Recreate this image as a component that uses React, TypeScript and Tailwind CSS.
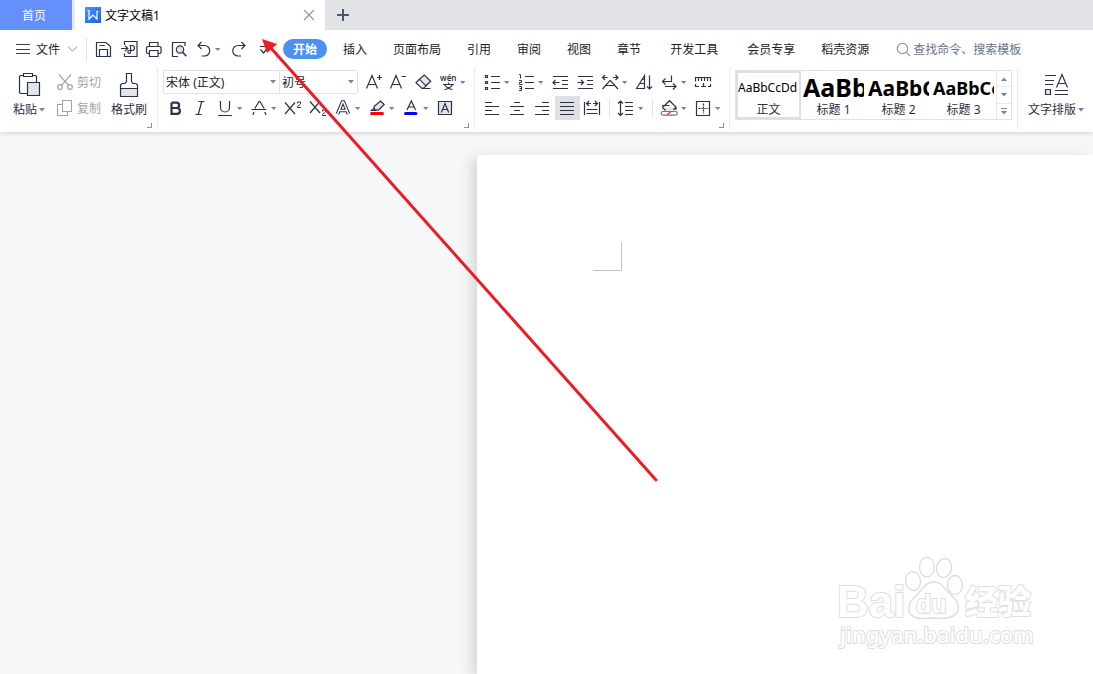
import React from "react";

const FONT = "font-['Noto_Sans','Noto_Sans_CJK_SC',sans-serif]";

type IconProps = { children: React.ReactNode; menu?: boolean };

function Glyph({ children, menu }: IconProps) {
  return (
    <svg
      width={menu ? 34 : 25}
      height={24}
      viewBox={menu ? "0 0 34 24" : "0 0 25 24"}
      fill="none"
      stroke="#2b3347"
      strokeWidth={1.2}
      aria-hidden="true"
      className="block shrink-0"
    >
      {children}
      {menu && <path d="M24 11h5.4l-2.7 3z" fill="#7382a0" stroke="none" />}
    </svg>
  );
}

function Tool({ label, menu, active, children }: IconProps & { label: string; active?: boolean }) {
  return (
    <button type="button" aria-label={label} title={label} className={active ? "shrink-0 bg-[#dde1e6]" : "shrink-0 hover:bg-gray-100"}>
      <Glyph menu={menu}>{children}</Glyph>
    </button>
  );
}

function Caret({ className = "" }: { className?: string }) {
  return (
    <svg width="6" height="4" viewBox="0 0 6 4" className={className} aria-hidden="true">
      <path d="M0 0h6l-3 3.5z" fill="#7382a0" />
    </svg>
  );
}

function Group({ children, className = "pl-[5px] pr-1", launcher }: { children: React.ReactNode; className?: string; launcher?: string }) {
  return (
    <section className={`relative flex h-[61px] shrink-0 border-r border-[#e9ebee] pt-[2px] ${className}`}>
      {children}
      {launcher && (
        <button type="button" aria-label={launcher} className="absolute right-[5px] bottom-px h-[5px] w-[5px] border-r border-b border-[#8791a8]" />
      )}
    </section>
  );
}

function RowDivider() {
  return (
    <span className="flex w-[9px] justify-center py-[3px]">
      <span className="w-px bg-[#dfe2e6]" />
    </span>
  );
}

function FontSelect({ label, value, className }: { label: string; value: string; className: string }) {
  return (
    <label className={`relative flex items-center ${className}`}>
      <select aria-label={label} className="h-full w-full appearance-none bg-transparent pt-[2px] pl-[2px] text-xs text-[#222] outline-none">
        <option>{value}</option>
      </select>
      <Caret className="pointer-events-none absolute right-[3px]" />
    </label>
  );
}

function TitleBar() {
  return (
    <header className="flex h-[30px] bg-[#e1e3e7] text-xs">
      <button type="button" className="w-[72px] bg-[#658ffb] pt-[2px] pr-1 text-white">首页</button>
      <div className="flex w-[253px] items-center border-l-[3px] border-[#e8eaed] bg-white pr-[10px] pl-[10px]">
        <svg width="16" height="16" viewBox="0 0 16 16" aria-hidden="true">
          <defs>
            <linearGradient id="brand" x1="0" y1="0" x2="1" y2="1">
              <stop offset="0" stopColor="#4b95f8" />
              <stop offset="1" stopColor="#1265ef" />
            </linearGradient>
          </defs>
          <rect width="16" height="16" fill="url(#brand)" />
          <path d="M2.500 3.500h1.500v8.500l4-4 4 4V4.500h1.500" fill="none" stroke="#fff" strokeWidth="1.200" />
        </svg>
        <span className="ml-1 flex-1 pt-[2px] text-black">文字文稿1</span>
        <button type="button" aria-label="关闭">
          <svg width="12" height="12" viewBox="0 0 12 12" stroke="#8b97ae" strokeWidth="1.2">
            <path d="M1 1l10 10M11 1L1 11" />
          </svg>
        </button>
      </div>
      <button type="button" aria-label="新建" className="ml-3 flex items-center">
        <svg width="12" height="12" viewBox="0 0 12 12" stroke="#4b5874" strokeWidth="2">
          <path d="M6 0v12M0 6h12" />
        </svg>
      </button>
    </header>
  );
}

const tabs = [
  { name: "插入" },
  { name: "页面布局" },
  { name: "引用" },
  { name: "审阅" },
  { name: "视图" },
  { name: "章节" },
  { name: "开发工具", wide: true },
  { name: "会员专享" },
  { name: "稻壳资源" },
];

function MenuBar() {
  return (
    <nav className="flex h-[38px] items-center bg-white text-xs text-[#222]">
      <button type="button" className="flex items-center pl-4">
        <svg width="14" height="12" viewBox="0 0 14 12" stroke="#3c4354" aria-hidden="true">
          <path d="M0 1.5h14M0 6.5h14M0 10.5h14" />
        </svg>
        <span className="ml-[6px] pt-[2px]">文件</span>
        <svg width="11" height="6" viewBox="0 0 11 6" fill="none" stroke="#8c939f" className="ml-[7px]" aria-hidden="true">
          <path d="M.8.5l4.7 4.5L10.2.5" />
        </svg>
      </button>
      <span className="mr-1 ml-2 h-[23px] w-px bg-[#dfe2e6]" />
      <Tool label="保存">
        <path d="M5.500 5.500h9.500l4.500 4v10h-14zM8.500 19.500v-7h8v7M8.500 8.500h5" />
      </Tool>
      <Tool label="输出为PDF">
        <path d="M8.500 8V4.500h12.500v15H8.500v-3M5 11.500h6.500M9 8.800l2.800 2.700L9 14.200M13.500 8.500h2.500a2.400 2.400 0 0 1 0 5h-2.800a1.400 1.400 0 1 0 1.400 1.600V8.500" />
      </Tool>
      <Tool label="打印">
        <path d="M8.500 9.500v-4h8.500v4M8.500 16.500H6.500l-1-1v-5l1-1h12.500l1 1v5l-1 1h-2M8.500 13.500h8.500v6H8.500z" />
      </Tool>
      <Tool label="打印预览">
        <path d="M12 19.500H6.500v-14h12.500v3.500" />
        <circle cx="14" cy="12.500" r="3.700" fill="#e3e5e9" />
        <path d="M16.700 15.200l3.600 4" strokeWidth="1.600" />
      </Tool>
      <Tool label="撤消" menu>
        <path d="M10.500 5L7 8.500l3.500 3.500M7 8.500h6.500a5 5 0 0 1 0 10.500h-3" />
      </Tool>
      <Tool label="恢复">
        <path d="M16.500 5L20 8.500 16.500 12M20 8.500h-7a5 5 0 0 0 0 10.500h3" />
      </Tool>
      <Tool label="自定义快速访问工具栏">
        <path d="M10 9.500h7M10.500 12.500l3 3.500 3-3.500" />
      </Tool>
      <span className="mr-[6px] ml-px h-[23px] w-px bg-[#dfe2e6]" />
      <button type="button" className="mr-[3px] h-5 rounded-full bg-[#4a91f2] px-[10px] pt-[2px] font-bold text-white">开始</button>
      {tabs.map((tab) => (
        <button key={tab.name} type="button" className={tab.wide ? "shrink-0 px-4 pt-[2px]" : "shrink-0 px-[13px] pt-[2px]"}>
          {tab.name}
        </button>
      ))}
      <label className="ml-[14px] flex flex-1 items-center">
        <svg width="15" height="15" viewBox="0 0 15 15" fill="none" stroke="#8b95a8" strokeWidth="1.2" aria-hidden="true" className="shrink-0">
          <circle cx="6.500" cy="6.500" r="5.200" />
          <path d="M10.300 10.300l3.700 3.700" />
        </svg>
        <input aria-label="查找命令、搜索模板" placeholder="查找命令、搜索模板" className="ml-[2px] w-full min-w-0 bg-transparent pt-[2px] outline-none placeholder:text-[#66738c]" />
      </label>
    </nav>
  );
}

function ClipboardGroup() {
  return (
    <Group className="pr-[10px] pl-[13px]" launcher="剪贴板">
      <button type="button" className="mr-3 flex w-8 flex-col items-center pt-[2px]">
        <svg width="24" height="26" viewBox="0 0 24 26" fill="none" stroke="#2b3347" strokeWidth="1.2" aria-hidden="true">
          <path d="M10 21.500H3.500l-1-1v-16l1-1h3M15.500 3.500h3l1 1v6" />
          <path d="M6.500 1.500h9v3h-9z" />
          <path d="M10.500 10.500h12v13h-12z" fill="#e3e5e9" />
        </svg>
        <span className="flex h-6 items-center gap-[2px]">粘贴<Caret /></span>
      </button>
      <div className="flex flex-col gap-[2px] text-[#a3a3a3]">
        <button type="button" disabled className="flex h-6 items-center gap-1">
          <svg width="16" height="16" viewBox="0 0 16 16" fill="none" stroke="#a3a3a3" strokeWidth="1.200" aria-hidden="true">
            <circle cx="3" cy="13" r="2.300" />
            <circle cx="13" cy="13" r="2.300" />
            <path d="M2 .5l9.500 10.800M14 .5L4.500 11.300" />
          </svg>
          <span className="pt-[2px]">剪切</span>
        </button>
        <button type="button" disabled className="flex h-6 items-center gap-1">
          <svg width="16" height="16" viewBox="0 0 16 16" fill="none" stroke="#a3a3a3" strokeWidth="1.100" aria-hidden="true">
            <path d="M5.500.5h9v11h-9zM5.500 4.500h-5v11h10v-4" />
          </svg>
          <span className="pt-[2px]">复制</span>
        </button>
      </div>
      <button type="button" className="ml-[10px] flex w-9 flex-col items-center pt-[2px]">
        <svg width="26" height="26" viewBox="0 0 26 26" fill="none" stroke="#2b3347" strokeWidth="1.200" aria-hidden="true">
          <path d="M4.500 16.500h17v8h-17z" fill="#e3e5e9" />
          <path d="M4.500 16.500v-3.500l1.500-1.500h3l1.500-2v-8h5v8l1.500 2h3l1.500 1.500v3.500" />
        </svg>
        <span className="flex h-6 items-center">格式刷</span>
      </button>
    </Group>
  );
}

function FontGroup() {
  return (
    <Group launcher="字体">
      <div className="flex flex-col gap-[2px]">
        <div className="flex">
          <div className="mr-[3px] flex h-6 w-[195px] rounded-[2px] border border-[#dfe1e5]">
            <FontSelect label="字体" value="宋体 (正文)" className="w-[116px] border-r border-[#dfe1e5]" />
            <FontSelect label="字号" value="初号" className="flex-1" />
          </div>
          <Tool label="增大字号"><path d="M5.500 18.500l5.500-13 5.500 13M7.500 14.500h7M16 7.500h5M18.500 5v5" /></Tool>
          <Tool label="减小字号"><path d="M4.500 18.500l5.500-13 5.500 13M6.500 14.500h7M15.500 6.500h4.500" /></Tool>
          <Tool label="清除格式">
            <path d="M8.500 9.300l4.700-4.300 6.500 6.300-4.700 4.500z" fill="#e3e5e9" />
            <path d="M8.500 9.300l-3.500 3.400 5.500 5.300h2.500l2-2.200M10.500 18.500h9" />
          </Tool>
          <Tool label="拼音指南" menu>
            <text x="4" y="11" fontSize="8" fontWeight="600" fill="#2b3347" stroke="none">wén</text>
            <path d="M7 14.500h11M12.500 12.500v2M8.500 15c2 2.500 4.500 4 8 4.500M16.500 15c-2 2.500-4.500 4-8 4.500" />
          </Tool>
        </div>
        <div className="flex">
          <Tool label="加粗"><path strokeWidth="2.200" d="M8.500 6.700h5a2.600 2.600 0 0 1 0 5.300h-5M13.500 12h.5a2.900 2.900 0 0 1 0 5.800h-5.500V6.700" /></Tool>
          <Tool label="倾斜"><path d="M10.500 5.500h6M7.500 18.500h6M13.700 5.500l-3.400 13" /></Tool>
          <Tool label="下划线" menu><path d="M7.500 5v6.500a4.500 4.500 0 0 0 9 0V5M5 19.500h14" /></Tool>
          <Tool label="删除线" menu><path d="M7.800 12.500l4.200-7h1l4.200 7M4.500 13.500h15M7 16l-1.200 3M17.800 16l1.200 3" /></Tool>
          <Tool label="上标">
            <path d="M4 6.500l10 11.500M14 6.500l-10 11.500" />
            <path strokeWidth="1" d="M16.500 7.500v-1.500h3v2l-3 2.500v1h3.500" />
          </Tool>
          <Tool label="下标">
            <path d="M4 5.500l10 11.500M14 5.500l-10 11.500" />
            <path strokeWidth="1" d="M16.500 15.500v-1.500h3v2l-3 2.500v1h3.500" />
          </Tool>
          <Tool label="文字效果" menu>
            <path strokeWidth="3.600" d="M6.500 18l5-12h1l5 12M8.500 14.500h7" />
            <path strokeWidth="1.500" stroke="#fff" d="M6.500 18l5-12h1l5 12M8.500 14.500h7" />
          </Tool>
          <Tool label="突出显示" menu>
            <path d="M15.500 5l3.700 3.500-5.700 5.500-4-.5-.5-3z" fill="#e3e5e9" />
            <path d="M9.500 12l-3 2.500h5" />
            <path d="M6.500 17.500h11" stroke="#f00" strokeWidth="3" strokeLinecap="round" />
          </Tool>
          <Tool label="字体颜色" menu>
            <path d="M8 14l4.300-9 4.300 9M9.500 11h5.800" />
            <path d="M6.500 17.500h10.500" stroke="#00f" strokeWidth="3" strokeLinecap="round" />
          </Tool>
          <Tool label="字符底纹">
            <path d="M5.500 5.500h13v13h-13z" fill="#e3e5e9" />
            <path d="M8.300 16.500l3.700-9 3.700 9M9.500 13.500h5" />
          </Tool>
        </div>
      </div>
    </Group>
  );
}

function ParagraphGroup() {
  return (
    <Group launcher="段落">
      <div className="flex flex-col gap-[2px]">
        <div className="flex">
          <Tool label="项目符号" menu>
            <path d="M5.500 5.500h2v2h-2zM5.500 11.500h2v2h-2zM5.500 17.500h2v2h-2zM11 6.500h9M11 12.500h9M11 18.500h9" />
          </Tool>
          <Tool label="编号" menu>
            <path strokeWidth="1" d="M5 4.500h1.500v4M5 10.500h2.500v2h-2v2h3M5 16.500h2.500v4H5M5.500 18.500h2" />
            <path d="M11 6.500h9M11 12.500h9M11 18.500h9" />
          </Tool>
          <Tool label="减少缩进量">
            <path d="M5 6.500h15M14 10.500h6M14 14.500h6M5 18.500h15M5 12.500h6.500M7.500 10l-2.500 2.500 2.500 2.500" />
          </Tool>
          <Tool label="增加缩进量">
            <path d="M5 6.500h15M14 10.500h6M14 14.500h6M5 18.500h15M4.500 12.500h6M8 10l2.500 2.500L8 15" />
          </Tool>
          <Tool label="中文版式" menu>
            <path d="M4.500 7.500h5M7 5L4.500 7.500 7 10M20 7.500h-5M17.500 5L20 7.500 17.500 10M4.500 19l7.500-8.500h.500L20 19M8 15.500h8.500" />
          </Tool>
          <Tool label="排序">
            <path d="M4.500 18.500l8-13v13zM10 9.500h2.500M8 13.500h4.500M17.500 5.500V19M15 16.500l2.500 2.500 2.500-2.500" />
          </Tool>
          <Tool label="显示编辑标记" menu>
            <path d="M14.500 5.500v6H5.500M8.500 8.500l-3 3 3 3M8 16.500h11M16 13.500l3 3-3 3" />
          </Tool>
          <Tool label="制表位">
            <path d="M4.500 11.500v-4h15v4M7.500 7.500V11M10.500 7.500V11M13.500 7.500V11M16.500 7.500V11M4.500 14v2.500H8M10 16.500h5M12.500 13v3.500M19.500 14v2.500H17" />
          </Tool>
        </div>
        <div className="flex">
          <Tool label="左对齐"><path d="M5 6.500h7M5 10.500h14M5 14.500h7M5 18.500h14" /></Tool>
          <Tool label="居中对齐"><path d="M9 6.500h6M5 10.500h14M9 14.500h6M5 18.500h14" /></Tool>
          <Tool label="右对齐"><path d="M12 6.500h7M5 10.500h14M12 14.500h7M5 18.500h14" /></Tool>
          <Tool label="两端对齐" active><path d="M5 6.500h14M5 10.500h14M5 14.500h14M5 18.500h14" /></Tool>
          <Tool label="分散对齐"><path d="M4.500 6v13M19.500 6v13M6.500 13.500h11M6.500 17.500h11M6.500 7.500h4.500M9 5L6.500 7.500 9 10M17.500 7.500H13M15 5l2.500 2.500L15 10" /></Tool>
          <RowDivider />
          <Tool label="行距" menu><path d="M6.500 5v14.500M4 7.500L6.500 5 9 7.500M4 17l2.500 2.500L9 17M11 6.500h8M11 10.500h8M11 14.500h8M11 18.500h8" /></Tool>
          <RowDivider />
          <Tool label="底纹颜色" menu>
            <path d="M7 11.500l1.500 3.500h8l2.500-3.500" fill="#e3e5e9" stroke="none" />
            <path d="M8.500 14.500l-3-3 7-6.800 6.500 6.300-2.500 3M5 9.500h7.500M19 11v3" />
            <path d="M6 15.500h12.500a1.700 1.700 0 0 1 0 3.700H6a1.700 1.700 0 0 1 0-3.700z" stroke="#777" fill="#fff" />
            <path d="M10 19l4-3.500" stroke="#f33" />
          </Tool>
          <Tool label="边框" menu>
            <path d="M5.500 5.500h13v14h-13z" />
            <path d="M12.500 7.500v10M7.500 12.500h10" strokeDasharray="2 1" />
          </Tool>
        </div>
      </div>
    </Group>
  );
}

const styles = [
  { name: "正文", sample: "AaBbCcDd", box: "outline-2 -outline-offset-2 outline-[#dcdfe5]", text: "text-xs" },
  { name: "标题 1", sample: "AaBb", box: "", text: "text-[25px] font-bold" },
  { name: "标题 2", sample: "AaBbC", box: "", text: "text-[21px] font-bold" },
  { name: "标题 3", sample: "AaBbCc", box: "", text: "text-lg font-bold" },
];

function StylesGroup() {
  return (
    <Group className="pr-[5px] pl-[5px]">
      <div className="flex h-[50px] border border-[#dfe1e5]">
        {styles.map((style) => (
          <button key={style.name} type="button" className={`flex w-[65px] flex-col ${style.box}`}>
            <span className={`flex h-[33px] w-full items-center overflow-hidden pr-[2px] pl-[2px] ${style.text}`}>
              <span className="overflow-hidden whitespace-nowrap text-black">{style.sample}</span>
            </span>
            <span className="w-full text-center leading-3">{style.name}</span>
          </button>
        ))}
        <div className="flex w-[15px] flex-col divide-y divide-[#e6e8eb] border-l border-[#e6e8eb]">
          <button type="button" aria-label="上一行样式" className="flex flex-1 items-center justify-center"><Caret className="rotate-180" /></button>
          <button type="button" aria-label="下一行样式" className="flex flex-1 items-center justify-center"><Caret /></button>
          <button type="button" aria-label="更多样式" className="flex flex-1 flex-col items-center justify-center gap-[2px]">
            <span className="h-px w-[6px] bg-[#7382a0]" />
            <Caret />
          </button>
        </div>
      </div>
    </Group>
  );
}

function Ribbon() {
  return (
    <div className="flex h-16 overflow-x-clip text-xs text-[#2a3040]">
      <ClipboardGroup />
      <FontGroup />
      <ParagraphGroup />
      <StylesGroup />
      <button type="button" className="ml-[10px] flex h-[61px] shrink-0 flex-col items-center pt-1">
        <svg width="24" height="26" viewBox="0 0 24 26" fill="none" stroke="#2b3347" strokeWidth="1.200" aria-hidden="true">
          <path d="M1 3.500h11M1 8.500h9M1 12.500h8M11 18.500h13M11 22.500h13M12.500 15.500l5.500-13 5.500 13M14.500 11.500h7" />
          <path d="M1.500 17.500h5v5h-5z" fill="#e3e5e9" />
        </svg>
        <span className="flex h-6 items-center gap-[2px]">文字排版<Caret /></span>
      </button>
    </div>
  );
}

function Watermark() {
  return (
    <svg
      width="204"
      height="104"
      viewBox="0 0 204 104"
      className="pointer-events-none absolute right-[53px] bottom-[18px]"
      fill="#fff"
      stroke="#dedede"
      strokeWidth="2"
      strokeLinejoin="round"
      role="img"
      aria-label="Baidu 经验"
    >
      <g paintOrder="stroke" fontWeight="700">
        <text x="1" y="65" fontSize="44" fontFamily="'Liberation Sans',sans-serif">Bai</text>
        <text x="129" y="62" fontSize="33" fontWeight="900" fontFamily="'Noto Sans CJK SC',sans-serif">经验</text>
        <text x="4" y="91" fontSize="22" fontWeight="500" fontFamily="'Noto Sans',sans-serif">jingyan.baidu.com</text>
      </g>
      <g strokeWidth="1.300" stroke="#dcdcdc">
        <ellipse cx="91" cy="15" rx="7.500" ry="9.800" />
        <ellipse cx="108" cy="16" rx="7.500" ry="9.500" transform="rotate(12 108 16)" />
        <ellipse cx="77" cy="29" rx="7.500" ry="9.500" transform="rotate(-8 77 29)" />
        <ellipse cx="119" cy="33" rx="7.500" ry="9.500" />
        <path d="M98 30c8 0 10 7 16 12 7 6 9 9 8 16-3 9-14 9-24 8-10 1-22 2-25-7-1-7 2-11 8-16 6-6 8-13 17-13z" />
      </g>
      <text x="80" y="61" fontSize="25" fontWeight="700" fontFamily="'Liberation Sans',sans-serif" paintOrder="stroke">du</text>
    </svg>
  );
}

function PointerArrow() {
  return (
    <svg width="396" height="444" viewBox="0 0 396 444" className="pointer-events-none absolute top-[38px] left-[262px] z-20" aria-hidden="true">
      <path d="M8 9L394 442" stroke="#ed1c24" strokeWidth="3" strokeLinecap="round" />
      <path d="M0 1l15 5-10 9z" fill="#ed1c24" />
    </svg>
  );
}

export default function App() {
  return (
    <div className={`relative flex min-h-screen flex-col overflow-hidden bg-[#f5f7f9] ${FONT}`}>
      <div className="relative z-10 bg-white shadow-[0_1px_5px_rgba(0,0,0,0.16)]">
        <TitleBar />
        <MenuBar />
        <Ribbon />
      </div>
      <main className="relative flex flex-1 pt-[23px] pl-[477px]">
        <article aria-label="文档页面" className="flex-1 bg-white pt-[87px] pl-[116px] shadow-[-6px_3px_12px_rgba(0,0,0,0.12)]">
          <div className="h-[29px] w-[29px] border-r border-b border-[#c3c3c3]" />
        </article>
        <Watermark />
      </main>
      <PointerArrow />
    </div>
  );
}
